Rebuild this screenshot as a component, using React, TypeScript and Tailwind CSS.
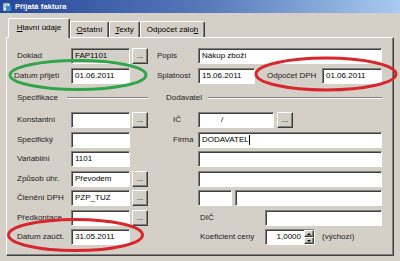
import React from 'react';

const sunken =
    'border border-t-[#808080] border-l-[#808080] border-r-white border-b-white shadow-[inset_1px_1px_0_#404040]';
const raised =
    'border border-t-white border-l-white border-r-[#404040] border-b-[#404040] shadow-[inset_-1px_-1px_0_#808080]';

function Input({ w, value = '', gray = false, cursor = false, className = '' }: { w: string; value?: string; gray?: boolean; cursor?: boolean; className?: string }) {
    return (
        <div className={`${w} h-[16px] shrink-0 flex items-center pl-[3px] text-black ${gray ? 'bg-[#d4d0c8]' : 'bg-white'} ${sunken} ${className}`}>
            <span className="whitespace-nowrap">{value}</span>
            {cursor && <span className="w-px h-[10px] bg-black"></span>}
        </div>
    );
}

function Dots() {
    return (
        <div className={`w-[16px] h-[16px] shrink-0 bg-[#d4d0c8] flex items-end justify-center pb-[3px] text-[8px] leading-none text-black ${raised}`}>
            ...
        </div>
    );
}

function Label({ w, children, className = '' }: { w: string; children?: React.ReactNode; className?: string }) {
    return <div className={`${w} shrink-0 whitespace-nowrap text-[#222] ${className}`}>{children}</div>;
}

const leftRows = [
    { label: 'Konstantní', value: '', btn: true },
    { label: 'Specifický', value: '', btn: false },
    { label: 'Variabilní', value: '1101', btn: false },
    { label: 'Způsob úhr.', value: 'Převodem', btn: true },
    { label: 'Členění DPH', value: 'PZP_TUZ', btn: true },
    { label: 'Předkontace', value: '', btn: true },
    { label: 'Datum zaúčt.', value: '31.05.2011', btn: false },
];

function RightRow({ i }: { i: number }) {
    if (i === 0)
        return (
            <>
                <Label w="w-[41px]" className="pl-[16px]">IČ</Label>
                <div className={`w-[76px] h-[16px] shrink-0 bg-white pl-[22px] flex items-center ${sunken}`}>/</div>
                <div className="w-[3px]"></div>
                <Dots />
            </>
        );
    if (i === 1)
        return (
            <>
                <Label w="w-[41px]" className="pl-[16px]">Firma</Label>
                <Input w="w-[184px]" value="DODAVATEL" cursor />
            </>
        );
    if (i === 2 || i === 3)
        return (
            <>
                <div className="w-[41px]"></div>
                <Input w="w-[184px]" />
            </>
        );
    if (i === 4)
        return (
            <>
                <div className="w-[41px]"></div>
                <Input w="w-[34px]" />
                <div className="w-[3px]"></div>
                <Input w="w-[147px]" />
            </>
        );
    if (i === 5)
        return (
            <>
                <div className="w-[43px]"></div>
                <Label w="w-[65px]">DIČ</Label>
                <Input w="w-[117px]" />
            </>
        );
    return (
        <>
            <div className="w-[43px]"></div>
            <Label w="w-[65px]">Koeficient ceny</Label>
            <div className={`w-[50px] h-[16px] shrink-0 bg-white flex items-center ${sunken}`}>
                <span className="flex-1 text-right pr-[3px]">1,0000</span>
                <div className="w-[10px] h-full flex flex-col">
                    <div className={`flex-1 bg-[#d4d0c8] flex items-center justify-center ${raised}`}>
                        <div className="w-0 h-0 border-l-[2px] border-r-[2px] border-b-[2px] border-l-transparent border-r-transparent border-b-black"></div>
                    </div>
                    <div className={`flex-1 bg-[#d4d0c8] flex items-center justify-center ${raised}`}>
                        <div className="w-0 h-0 border-l-[2px] border-r-[2px] border-t-[2px] border-l-transparent border-r-transparent border-t-black"></div>
                    </div>
                </div>
            </div>
            <div className="w-[7px]"></div>
            <Label w="w-auto">(výchozí)</Label>
        </>
    );
}

function Tab({ children, active = false, w }: { children: React.ReactNode; active?: boolean; w: string }) {
    return (
        <div
            className={`${w} shrink-0 flex items-center justify-center bg-[#d4d0c8] border-t border-l border-t-white border-l-white border-r border-r-[#404040] shadow-[inset_-1px_0_0_#808080] rounded-t-[2px] ${
                active ? 'h-[20px] relative z-10 -mb-px -ml-[2px] pb-[2px]' : 'h-[16px] pt-[1px]'
            }`}
        >
            {children}
        </div>
    );
}

export default function App() {
    return (
        <div className="w-[400px] h-[261px] bg-[#d4d0c8] relative overflow-hidden font-['Liberation_Sans',Arial,sans-serif] text-[8px] text-black">
            {/* Title bar */}
            <div className="h-[13px] flex items-center gap-[3px] pl-[2px] bg-gradient-to-r from-[#27489a] via-[#5677b8] to-[#a9cbf0]">
                <svg width="10" height="10" viewBox="0 0 10 10">
                    <rect x="1" y="1" width="7" height="8" fill="#e8f0f8" stroke="#2a5a9a" strokeWidth="0.8" />
                    <rect x="4" y="4" width="5" height="5" fill="#3a8ad0" />
                    <path d="M2 3h4M2 5h2" stroke="#5a7ab0" strokeWidth="0.7" />
                </svg>
                <span className="text-white font-bold text-[7.5px] tracking-[0.1px]">Přijatá faktura</span>
            </div>

            {/* Tabs */}
            <div className="flex items-end pl-[10px] mt-[5px] h-[19px]">
                <Tab active w="w-[62px]">
                    <span><span className="underline">H</span>lavní údaje</span>
                </Tab>
                <Tab w="w-[39px]">
                    <span><span className="underline">O</span>statní</span>
                </Tab>
                <Tab w="w-[31px]">
                    <span><span className="underline">T</span>exty</span>
                </Tab>
                <Tab w="w-[65px]">
                    <span>Odpočet zálo<span className="underline">h</span></span>
                </Tab>
            </div>

            {/* Panel */}
            <div className="mx-[6px] h-[219px] border-t border-l border-t-white border-l-white border-r border-b border-r-[#404040] border-b-[#404040] shadow-[inset_-1px_-1px_0_#808080] pl-[10px] pt-[10px]">
                <div className="flex flex-col gap-[4px]">
                    <div className="flex items-center">
                        <Label w="w-[54px]">Doklad</Label>
                        <Input w="w-[59px]" value="FAP1101" gray />
                        <div className="w-[2px]"></div>
                        <Dots />
                        <div className="w-[9px]"></div>
                        <Label w="w-[41px]">Popis</Label>
                        <Input w="w-[184px]" value="Nákup zboží" />
                    </div>
                    <div className="flex items-center">
                        <Label w="w-[54px]" className="-ml-[3px] w-[57px]">Datum přijetí</Label>
                        <Input w="w-[59px]" value="01.06.2011" />
                        <div className="w-[18px]"></div>
                        <div className="w-[9px]"></div>
                        <Label w="w-[41px]">Splatnost</Label>
                        <Input w="w-[57px]" value="15.06.2011" />
                        <div className="w-[12px]"></div>
                        <Label w="w-[55px]">Odpočet DPH</Label>
                        <Input w="w-[60px]" value="01.06.2011" />
                    </div>
                </div>

                {/* Section headers */}
                <div className="flex items-center h-[12px] mt-[8px]">
                    <span className="text-[#222] w-[50px] shrink-0">Specifikace</span>
                    <div className="w-[81px] h-[2px] border-t border-t-[#808080] border-b border-b-white"></div>
                    <div className="w-[18px]"></div>
                    <span className="text-[#222] w-[42px] shrink-0">Dodavatel</span>
                    <div className="w-[174px] h-[2px] border-t border-t-[#808080] border-b border-b-white"></div>
                </div>

                {/* Lower rows */}
                <div className="flex flex-col gap-[3.5px] mt-[8px]">
                    {leftRows.map((r, i) => (
                        <div key={r.label} className="flex items-center">
                            <Label w="w-[54px]">{r.label}</Label>
                            <Input w="w-[59px]" value={r.value} />
                            <div className="w-[2px]"></div>
                            {r.btn ? <Dots /> : <div className="w-[16px]"></div>}
                            <div className="w-[9px]"></div>
                            <RightRow i={i} />
                        </div>
                    ))}
                </div>
            </div>

            {/* Annotation ellipses drawn over the dialog */}
            <svg className="absolute left-0 top-0 pointer-events-none" width="400" height="261" viewBox="0 0 400 261">
                <ellipse cx="78" cy="75" rx="68" ry="14.5" fill="none" stroke="#2fa64a" strokeWidth="3" />
                <ellipse cx="326" cy="74" rx="70" ry="16" fill="none" stroke="#d8262c" strokeWidth="3" />
                <ellipse cx="75.5" cy="235" rx="67" ry="15.5" fill="none" stroke="#d8262c" strokeWidth="3" />
            </svg>
        </div>
    );
}
